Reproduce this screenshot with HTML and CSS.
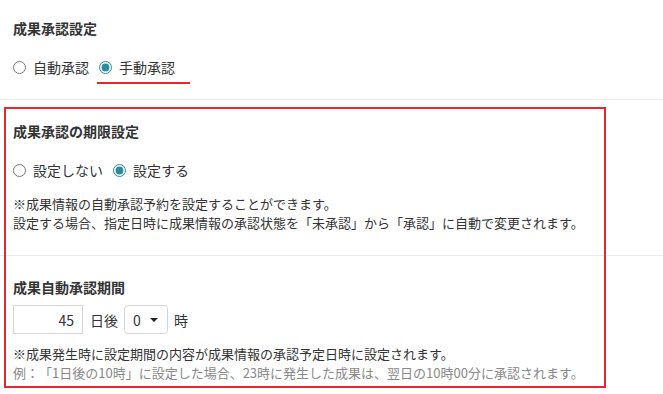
FILE: index.html
```html
<!DOCTYPE html>
<html lang="ja">
<head>
  <meta charset="UTF-8" />
  <title>成果承認設定</title>
  <link rel="stylesheet" href="styles.css">
</head>
<body>
  <div class="page">
    <div class="section first">
      <h3 class="title">成果承認設定</h3>
      <div class="radios">
        <label class="opt"><input type="radio" name="mode"> 自動承認</label>
        <label class="opt"><input type="radio" name="mode" checked> 手動承認</label>
      </div>
    </div>
    <div class="section second">
      <h3 class="title">成果承認の期限設定</h3>
      <div class="radios">
        <label class="opt"><input type="radio" name="limit"> 設定しない</label>
        <label class="opt"><input type="radio" name="limit" checked> 設定する</label>
      </div>
      <p class="note">※成果情報の自動承認予約を設定することができます。<br>設定する場合、指定日時に成果情報の承認状態を「未承認」から「承認」に自動で変更されます。</p>
    </div>
    <div class="section third">
      <h3 class="title">成果自動承認期間</h3>
      <div class="period">
        <input class="days" type="text" value="45">
        <span>日後</span>
        <div class="hour">0<span class="caret"></span></div>
        <span>時</span>
      </div>
      <p class="note">※成果発生時に設定期間の内容が成果情報の承認予定日時に設定されます。<br><span class="sub">例：「1日後の10時」に設定した場合、23時に発生した成果は、翌日の10時00分に承認されます。</span></p>
    </div>

    <!-- annotations -->
    <div class="mark-line"></div>
    <div class="mark-box"></div>
  </div>
</body>
</html>
```

FILE: styles.css
```css
* {
  margin: 0;
  padding: 0;
  box-sizing: border-box;
}
body {
  background-color: #fff;
  color: #333;
  font-family: "Noto Sans CJK JP", "Noto Sans", sans-serif;
  font-size: 14px;
  text-spacing-trim: space-all;
}
.page {
  position: relative;
  width: 663px;
  height: 394px;
  overflow: hidden;
}
.section {
  padding: 0 13px;
}
.first {
  padding-top: 18px;
  padding-bottom: 22px;
  border-bottom: 1px solid #ebebeb;
}
.second {
  padding-top: 21px;
  padding-bottom: 23px;
  border-bottom: 1px solid #ebebeb;
}
.third {
  padding-top: 21px;
}
.title {
  font-size: 14px;
  font-weight: bold;
  line-height: 20px;
  color: #333;
}
.radios {
  display: flex;
  gap: 10px;
  margin-top: 19px;
  line-height: 20px;
}
.opt {
  display: flex;
  align-items: center;
  gap: 7px;
}
.opt input {
  width: 13px;
  height: 13px;
  margin: 0;
  accent-color: #2b8c9c;
}
.note {
  margin-top: 14px;
  font-size: 13px;
  line-height: 19px;
  color: #333;
}
.third .note {
  margin-top: 10px;
}
.sub {
  color: #888;
}
.period {
  display: flex;
  align-items: center;
  gap: 6px;
  margin-top: 8px;
}
.days {
  width: 70px;
  height: 29px;
  border: 1px solid #d6d6d6;
  padding: 0 8px;
  text-align: right;
  font-family: inherit;
  font-size: 14px;
  color: #333;
  margin-right: 1px;
}
.hour {
  display: flex;
  align-items: center;
  justify-content: space-between;
  width: 44px;
  height: 29px;
  border: 1px solid #d6d6d6;
  border-radius: 4px;
  padding: 0 9px 0 8px;
}
.caret {
  width: 0;
  height: 0;
  border-left: 4px solid transparent;
  border-right: 4px solid transparent;
  border-top: 4px solid #222;
}
.mark-line {
  position: absolute;
  left: 97px;
  top: 82px;
  width: 93px;
  height: 2px;
  background-color: #e8262b;
}
.mark-box {
  position: absolute;
  left: 4px;
  top: 107px;
  width: 602px;
  height: 281px;
  border: 2px solid #e8262b;
}
```
